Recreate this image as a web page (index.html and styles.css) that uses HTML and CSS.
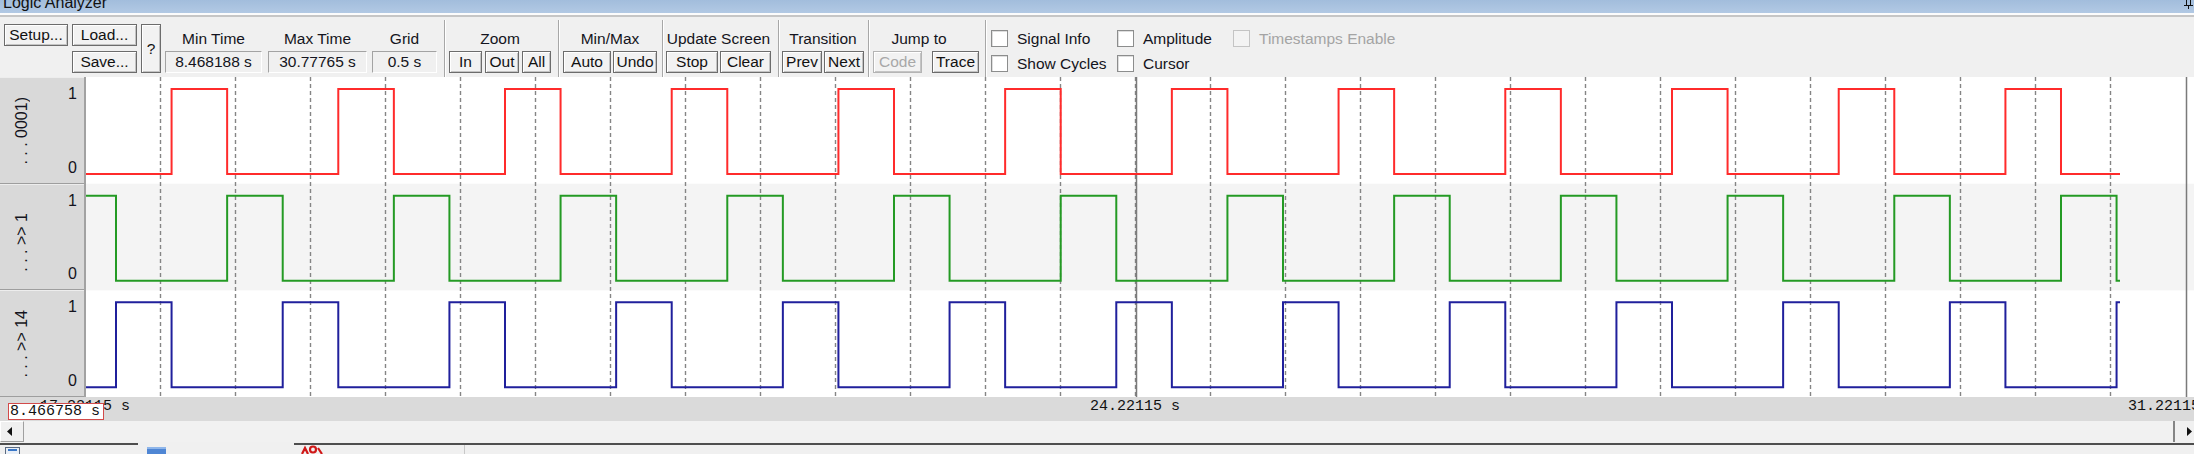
FILE: index.html
```html
<!DOCTYPE html>
<html lang="en">
<head>
    <meta charset="UTF-8">
    <meta name="viewport" content="width=device-width, initial-scale=1.0">
    <title>Logic Analyzer</title>
    <link rel="stylesheet" href="styles.css">
</head>
<body>
    <div class="titlebar">
        <span class="title">Logic Analyzer</span>
        <svg class="pin" width="10" height="9" viewBox="0 0 10 9"><path d="M3.5 0v5M7.5 0v5M1 5.5h9M5.5 5.5v4" stroke="#111" fill="none"/></svg>
    </div>
    <div class="rule"></div>

    <div class="toolbar">
        <div class="file">
            <button class="btn setup">Setup...</button>
            <button class="btn load">Load...</button>
            <button class="btn save">Save...</button>
            <button class="btn help">?</button>
        </div>
        <div class="field f-min"><span class="cap">Min Time</span><span class="value">8.468188 s</span></div>
        <div class="field f-max"><span class="cap">Max Time</span><span class="value">30.77765 s</span></div>
        <div class="field f-grid"><span class="cap">Grid</span><span class="value">0.5 s</span></div>
        <div class="sep s-1"></div>
        <div class="field g-zoom">
            <span class="cap">Zoom</span>
            <div class="btns"><button class="btn b-in">In</button><button class="btn b-out">Out</button><button class="btn b-all">All</button></div>
        </div>
        <div class="sep s-2"></div>
        <div class="field g-minmax">
            <span class="cap">Min/Max</span>
            <div class="btns"><button class="btn b-auto">Auto</button><button class="btn b-undo">Undo</button></div>
        </div>
        <div class="sep s-3"></div>
        <div class="field g-update">
            <span class="cap">Update Screen</span>
            <div class="btns"><button class="btn b-stop">Stop</button><button class="btn b-clear">Clear</button></div>
        </div>
        <div class="sep s-4"></div>
        <div class="field g-trans">
            <span class="cap">Transition</span>
            <div class="btns"><button class="btn b-prev">Prev</button><button class="btn b-next">Next</button></div>
        </div>
        <div class="sep s-5"></div>
        <div class="field g-jump">
            <span class="cap">Jump to</span>
            <div class="btns"><button class="btn b-code" disabled>Code</button><button class="btn b-trace">Trace</button></div>
        </div>
        <div class="sep s-6"></div>
        <div class="checks">
            <label class="chk"><span class="box"></span>Signal Info</label>
            <label class="chk"><span class="box"></span>Amplitude</label>
            <label class="chk off"><span class="box"></span>Timestamps Enable</label>
            <label class="chk"><span class="box"></span>Show Cycles</label>
            <label class="chk"><span class="box"></span>Cursor</label>
        </div>
    </div>

    <div class="scope">
        <div class="names">
            <div class="name"><span class="nm">. . . 0001)</span><span class="lv"><b>1</b><b>0</b></span></div>
            <div class="name"><span class="nm">. . . &gt;&gt; 1</span><span class="lv"><b>1</b><b>0</b></span></div>
            <div class="name"><span class="nm">. . . &gt;&gt; 14</span><span class="lv"><b>1</b><b>0</b></span></div>
        </div>
        <svg class="plot" width="2108" height="320" viewBox="0 0 2108 320">
            <rect y="106.67" width="2108" height="106.67" fill="#f4f4f4"/>
            <path class="grid" d="M74.5 0V320M149.5 0V320M224.5 0V320M299.5 0V320M374.5 0V320M449.5 0V320M524.5 0V320M599.5 0V320M674.5 0V320M749.5 0V320M824.5 0V320M899.5 0V320M974.5 0V320M1049.5 0V320M1124.5 0V320M1199.5 0V320M1274.5 0V320M1349.5 0V320M1424.5 0V320M1499.5 0V320M1574.5 0V320M1649.5 0V320M1724.5 0V320M1799.5 0V320M1874.5 0V320M1949.5 0V320M2024.5 0V320"/>
            <path class="cursor" d="M1050.5 0V320M2100.5 0V320"/>
            <!-- phase A -->
            <path class="sig red" d="M0 97H85.571V12h55.571V97h111.143V12h55.571V97h111.143V12h55.571V97h111.143V12h55.571V97h111.143V12h55.571V97h111.143V12h55.571V97h111.143V12h55.571V97h111.143V12h55.571V97h111.143V12h55.571V97h111.143V12h55.571V97h111.143V12h55.571V97h111.143V12h55.571V97H2034"/>
            <!-- phase B -->
            <path class="sig green" transform="translate(0 106.67)" d="M0 12H30V97H141.143V12h55.571V97h111.143V12h55.571V97h111.143V12h55.571V97h111.143V12h55.571V97h111.143V12h55.571V97h111.143V12h55.571V97h111.143V12h55.571V97h111.143V12h55.571V97h111.143V12h55.571V97h111.143V12h55.571V97h111.143V12h55.571V97h111.143V12h55.571V97H2034"/>
            <!-- phase C -->
            <path class="sig blue" transform="translate(0 213.33)" d="M0 97H30V12h55.571V97h111.143V12h55.571V97h111.143V12h55.571V97h111.143V12h55.571V97h111.143V12h55.571V97h111.143V12h55.571V97h111.143V12h55.571V97h111.143V12h55.571V97h111.143V12h55.571V97h111.143V12h55.571V97h111.143V12h55.571V97h111.143V12h55.571V97H2030.571V12H2034"/>
        </svg>
    </div>

    <div class="axis">
        <span class="mark" style="left:40px">17.22115 s</span>
        <span class="mark" style="left:1090px">24.22115 s</span>
        <span class="mark" style="left:2128px">31.22115 s</span>
        <span class="readout">8.466758 s</span>
    </div>

    <div class="scroll">
        <div class="arrow left"><svg width="5" height="9" viewBox="0 0 5 9"><path d="M5 0V9L0 4.5z" fill="#111"/></svg></div>
        <div class="track"></div>
        <div class="arrow right"><svg width="5" height="9" viewBox="0 0 5 9"><path d="M0 0V9L5 4.5z" fill="#111"/></svg></div>
    </div>

    <div class="dock">
        <div class="tab t-1"><svg width="17" height="9" viewBox="0 0 17 9"><rect x="0.5" y="2.5" width="14" height="8" fill="#e8eef6" stroke="#5a6a80"/><rect x="3" y="4" width="9" height="2" fill="#3a78c8"/></svg></div>
        <div class="tab t-2"><svg width="19" height="9" viewBox="0 0 19 9"><rect y="2" width="19" height="7" fill="#4f86d4"/><rect y="2" width="19" height="2" fill="#8fb6ea"/></svg></div>
        <div class="tab t-3"><svg width="22" height="9" viewBox="0 0 22 9"><path d="M1 9L4 3L7 9M9 4.5a3 3 0 1 0 6 0a3 3 0 1 0 -6 0M17 3l4 6" stroke="#d01818" stroke-width="2.2" fill="none"/></svg><span class="divider"></span></div>
    </div>
</body>
</html>
```

FILE: styles.css
```css
*{margin:0;padding:0;box-sizing:border-box}
body{width:2194px;height:454px;overflow:hidden;background:#f0f0f0;font-family:"Liberation Sans",Arial,sans-serif;font-size:15.5px;color:#141420}

.titlebar{height:13px;overflow:hidden;display:flex;justify-content:space-between;background:linear-gradient(#a2bddc,#b2c9e4)}
.titlebar .title{font-size:16px;line-height:16px;margin:-5px 0 0 3px;color:#111}
.titlebar .pin{margin-right:1px}
.rule{height:4px;border-top:2px solid #fcfcfc;background:#c6c6c6}

.toolbar{height:60px;padding-top:7px;display:flex;align-items:flex-start}
.btn{font:inherit;color:#111;height:22px;padding:0;line-height:20px;text-align:center;background:#f2f2f2;border:1px solid #6c6c6c;box-shadow:inset 1px 1px 0 #fff,inset -1px -1px 0 #c4c4c4}
.btn:disabled{color:#a8a8a8;border-color:#b4b4b4}
.file{margin-left:4px;display:grid;grid-template-columns:64px 65px 20px;grid-template-rows:22px 22px;gap:5px 4px}
.file .setup{grid-row:1;grid-column:1}
.file .load{grid-row:1;grid-column:2}
.file .save{grid-row:2;grid-column:2}
.file .help{grid-row:1 / 3;grid-column:3;height:49px}

.field{display:flex;flex-direction:column}
.cap{height:27px;line-height:29px;text-align:center;white-space:nowrap}
.value{height:22px;line-height:20px;text-align:center;background:#f0f0f0;border:1px solid;border-color:#a3a3a3 #fff #fff #a3a3a3}
.btns{display:flex;gap:2px}
.f-min{margin-left:4px;width:97px}
.f-max{margin-left:6px;width:99px}
.f-grid{margin-left:5px;width:65px}
.sep{align-self:stretch;width:2px;margin-top:-4px;border-left:1px solid #a7a7a7;border-right:1px solid #fff}
.s-1{margin-left:7px}
.s-2{margin-left:7px}
.s-3{margin-left:5px}
.s-4{margin-left:7px}
.s-5{margin-left:4px}
.s-6{margin-left:6px}
.g-zoom{margin-left:3px}
.g-zoom .btns{gap:3px}
.b-in{width:33px}
.b-out{width:34px}
.b-all{width:29px}
.g-minmax{margin-left:3px}
.b-auto{width:48px}
.b-undo{width:44px}
.g-update{margin-left:2px}
.b-stop{width:52px}
.b-clear{width:51px}
.g-trans{margin-left:2px}
.b-prev{width:40px}
.b-next{width:40px}
.g-jump{margin-left:3px}
.g-jump .cap{padding-right:14px}
.g-jump .btns{gap:10px}
.b-code{width:49px}
.b-trace{width:47px}

.checks{margin-left:4px;margin-top:2px;display:grid;grid-template-columns:126px 116px auto;grid-auto-rows:25px}
.chk{display:flex;align-items:center;gap:9px;white-space:nowrap}
.chk .box{width:17px;height:17px;background:#fff;border:1px solid #8c8d8d;box-shadow:inset 1px 1px 0 #dedede}
.chk.off{color:#a4a4a4}
.chk.off .box{background:#f3f3f3;border-color:#c4c4c4;box-shadow:none}

.scope{height:320px;display:flex;background:#fff}
.names{width:86px;display:flex;flex-direction:column;border-right:2px solid #a2a2a2}
.name{flex:1;display:flex;justify-content:space-between;padding:7px 7px 6px 13px;background:#d9d9d9;border-top:1px solid #ededed;border-bottom:1px solid #9e9e9e;line-height:18px;font-size:16px}
.nm{writing-mode:vertical-rl;transform:rotate(180deg);align-self:flex-end;margin-bottom:12px;white-space:nowrap}
.lv{display:flex;flex-direction:column;justify-content:space-between;text-align:right}
.lv b{font-weight:normal}
.plot{display:block}
.plot .grid{stroke:#858585;stroke-width:1.4;stroke-dasharray:4 3}
.plot .cursor{stroke:#7a7a7a;stroke-width:1.5}
.plot .sig{fill:none;stroke-width:2}
.plot .red{stroke:#ff2b2b}
.plot .green{stroke:#249a24}
.plot .blue{stroke:#20209c}

.axis{height:24px;position:relative;overflow:hidden;background:#dadada;font-family:"Liberation Mono","DejaVu Sans Mono",monospace;font-size:15px;line-height:20px;color:#111}
.mark{position:absolute;top:0;white-space:nowrap}
.readout{position:absolute;left:8px;top:6px;width:96px;height:17px;line-height:15px;padding-left:1px;background:#fff;border:1px solid #d24a4a}

.scroll{height:21px;display:flex;background:#f1f1f1}
.arrow{display:flex;align-items:center;background:#f0f0f0}
.arrow.left{width:24px;padding-left:6px;border:1px solid;border-color:#fff #a0a0a0 #a0a0a0 #fff}
.arrow.right{width:21px;padding-left:12px;border-left:2px solid #858585}
.track{flex:1}

.dock{height:12px;padding-top:1px;display:flex}
.tab{display:flex;align-items:flex-end;overflow:hidden}
.t-1{width:138px;padding-left:5px;border-top:2px solid #4e4e4e}
.t-2{width:156px;padding-left:9px;border-top:2px solid #f0f0f0}
.t-3{flex:1;padding-left:7px;border-top:2px solid #4e4e4e}
.divider{width:1px;height:9px;margin-left:141px;background:#c8c8c8}
```
